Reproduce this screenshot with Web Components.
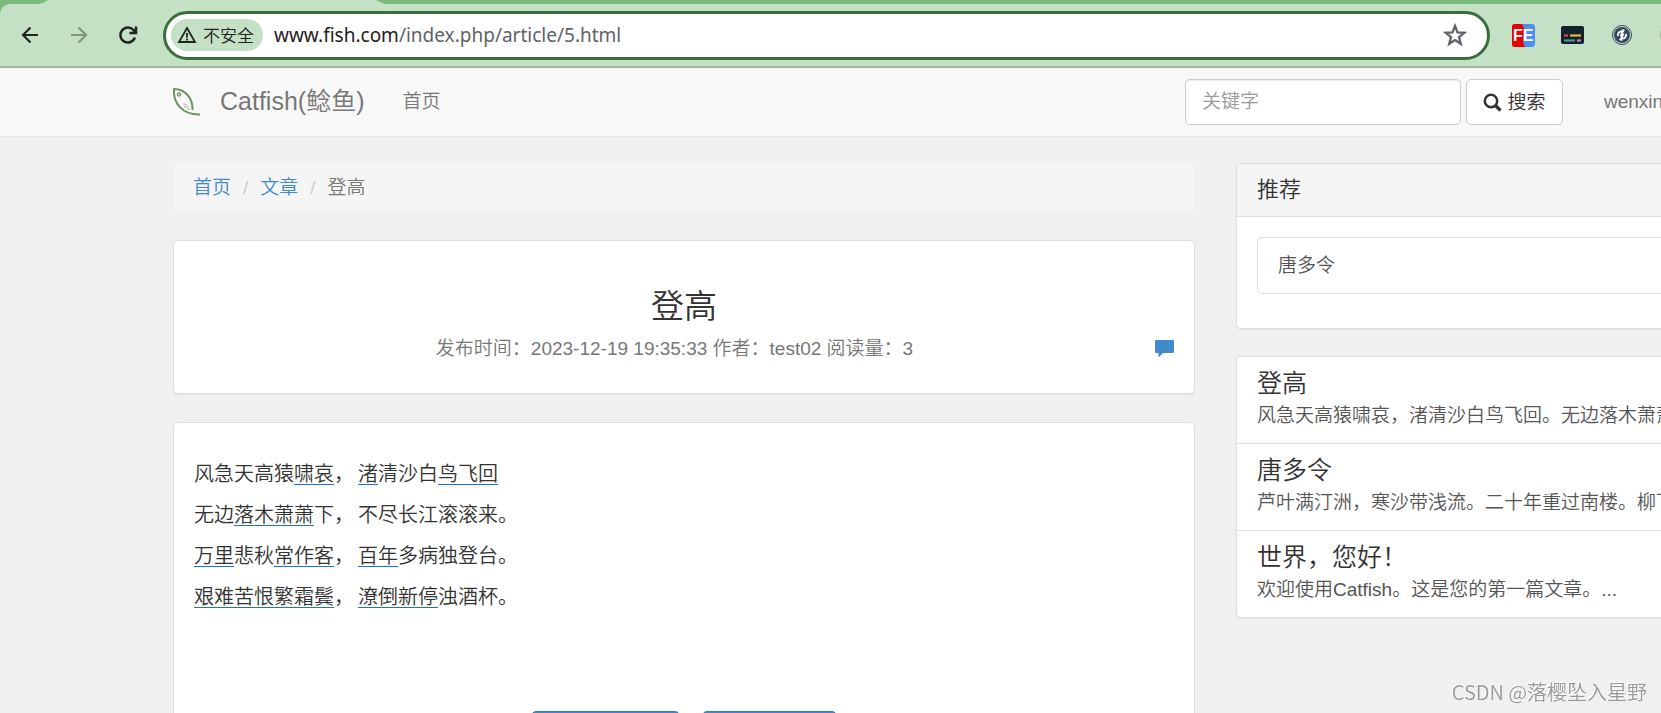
<!DOCTYPE html>
<html lang="zh-CN">
<head>
<meta charset="utf-8">
<title>登高</title>
<style>
  html, body { margin: 0; height: 100%; overflow: hidden; }
  body {
    background: #f0f0f0; color: #333;
    font: 350 19px/27px "Liberation Sans", "Noto Sans CJK SC", sans-serif;
    text-spacing-trim: space-all;
    --line: #ddd; --link: #428bca; --muted: #777;
  }
</style>
</head>
<body>
<browser-bar></browser-bar>
<site-nav></site-nav>
<page-columns>
  <crumb-trail slot="main"></crumb-trail>
  <article-head slot="main"></article-head>
  <article-body slot="main"></article-body>
  <recommend-panel slot="side"></recommend-panel>
  <article-list slot="side">
    <article-item heading="登高">风急天高猿啸哀，渚清沙白鸟飞回。无边落木萧萧</article-item>
    <article-item heading="唐多令">芦叶满汀洲，寒沙带浅流。二十年重过南楼。柳下</article-item>
    <article-item heading="世界，您好！">欢迎使用Catfish。这是您的第一篇文章。...</article-item>
  </article-list>
</page-columns>
<water-mark>CSDN @落樱坠入星野</water-mark>

<script>
const define = (name, html) => customElements.define(name, class extends HTMLElement {
  constructor() {
    super();
    this.attachShadow({ mode: "open" }).innerHTML =
      "<style>*{box-sizing:border-box}a{color:inherit;text-decoration:none}</style>" + html;
  }
});

define("browser-bar", `
<style>
  :host { display: block; background: #7bbb7c; border-bottom: 2px solid #9fb5a0; }
  .strip { display: flex; height: 4px; }
  .tab { width: 377px; height: 4px; }
  .bar { display: flex; align-items: center; height: 62px; background: #c5e1c5; border-top-left-radius: 10px; }
  button { border: 0; padding: 0; background: none; width: 49px; height: 40px; display: grid; place-items: center; }
  .nav { display: flex; padding-left: 5px; margin-right: 11px; }
  .box { flex: 1; min-width: 0; display: flex; align-items: center; height: 49px; border: 3px solid #3a6f3c;
    border-radius: 25px; background: #fff; padding: 0 8px 0 5px; }
  .chip { display: flex; align-items: center; gap: 6px; width: 92px; height: 32px; padding-left: 6px; border-radius: 16px;
    background: #c5e1c5; color: #1f2420; font-size: 17px; line-height: 32px; white-space: nowrap; }
  .chip span { padding-top: 3px; }
  .url { flex: 1; padding-left: 11px; color: #5f6368; font: 400 19px/27px "Noto Sans", sans-serif; white-space: nowrap; }
  .url b { font-weight: 400; color: #1f2023; }
  .ext { display: flex; width: 171px; padding-left: 9px; overflow: hidden; }
  .ext button { flex: none; }
</style>
<div class="strip"><svg class="tab" viewBox="0 0 377 4" preserveAspectRatio="none"><path d="M36 4C42 4 45 2 48 0H376C378 2 384 4 390 4Z" fill="#c5e1c5"/></svg><svg width="20" height="4"><path d="M0 0C2 2 6 4 12 4H0Z" fill="#c5e1c5"/></svg></div>
<div class="bar">
  <div class="nav">
    <button aria-label="后退"><svg width="20" height="20" fill="none" stroke="#1f2420" stroke-width="2.2"><path d="M18 10H3M10.500 2.500L3 10l7.500 7.500"/></svg></button>
    <button aria-label="前进"><svg width="20" height="20" fill="none" stroke="#82957f" stroke-width="2.200"><path d="M2 10h15M9.500 2.500L17 10l-7.500 7.500"/></svg></button>
    <button aria-label="刷新"><svg width="20" height="20" fill="none" stroke="#1f2420" stroke-width="2.500"><path d="M17 12.500A7.500 7.500 0 1 1 15.500 5L18 8M18 1.500V8H11.500"/></svg></button>
  </div>
  <div class="box">
    <div class="chip"><svg width="20" height="18" fill="none" stroke="#1f2420" stroke-width="1.800"><path d="M10 2L18 16H2ZM10 7v4.500M10 12.500v2"/></svg><span>不安全</span></div>
    <div class="url"><b>www.fish.com</b>/index.php/article/5.html</div>
    <button aria-label="收藏"><svg width="24" height="24" fill="none" stroke="#5f6368" stroke-width="2.300"><path d="M12 3l2.500 6.400 6.800.4-5.300 4.300 1.800 6.700L12 17l-5.800 3.800L8 14.100 2.700 9.800l6.800-.4Z"/></svg></button>
  </div>
  <div class="ext">
    <button aria-label="FE"><svg width="23" height="23"><rect width="23" height="23" rx="3" fill="#4a90f0"/><path d="M3 0H10Q13 4 11.500 11T13 23H3Q0 23 0 20V3Q0 0 3 0Z" fill="#e60000"/><text x="1" y="17" font-family="Liberation Sans" font-weight="700" font-size="16" fill="#fff">FE</text></svg></button>
    <button aria-label="字幕"><svg width="23" height="18"><rect width="23" height="18" rx="2" fill="#14232b"/><path d="M3 9.500h4" stroke="#e4484b" stroke-width="2.200"/><path d="M9 9.500h11" stroke="#f2b632" stroke-width="2.200"/><path d="M3 14.500h11" stroke="#3f9a9c" stroke-width="2.200"/><path d="M16 14.500h4" stroke="#b687c4" stroke-width="2.200"/></svg></button>
    <button aria-label="同步"><svg width="22" height="22" fill="none"><circle cx="11" cy="11" r="9.500" fill="#c5e1c5" stroke="#34495e"/><circle cx="11" cy="11" r="8" fill="#34495e"/><path d="M7 12C6.500 9 8.500 7 11.500 7.500L9.500 12.500M15 10C15.500 13 13.500 15 10.500 14.500L12.500 9.500" stroke="#fff" stroke-width="1.800"/><path d="M10.500 5l3.500 1-2 3ZM11.500 17l-3.500-1 2-3Z" fill="#fff"/></svg></button>
    <button aria-label="扩展"><svg width="24" height="22"><circle cx="12" cy="11" r="11" fill="#9bb09c"/></svg></button>
  </div>
</div>`);

define("site-nav", `
<style>
  :host { display: block; background: #f8f8f8; border-bottom: 1px solid #e7e7e7; overflow: hidden; }
  nav { display: flex; align-items: center; height: 68px; padding-left: 173px; color: var(--muted); white-space: nowrap; }
  .brand { display: flex; align-items: center; gap: 19px; font-size: 25px; }
  .brand span, .home, .user { padding-bottom: 2px; }
  .home { margin-left: 38px; flex: 1; }
  form { display: flex; gap: 5px; }
  input { width: 276px; height: 46px; padding: 0 16px; border: 1px solid #ccc; border-radius: 5px; background: #fff;
    font: inherit; box-shadow: inset 0 1px 1px rgba(0,0,0,.075); }
  input::placeholder { color: #999; opacity: 1; }
  button { display: flex; align-items: center; justify-content: center; gap: 5px; width: 97px; height: 46px; padding: 0;
    border: 1px solid #ccc; border-radius: 5px; background: #fff; color: #333; font: inherit; }
  .user { width: 57px; margin-left: 41px; overflow: hidden; }
</style>
<nav>
  <a class="brand" href="#"><svg width="28" height="30" fill="none" stroke="#6c9460" stroke-width="2"><path d="M19.500 23C20 11 12 2 1 2C0 16 9 28 27 27.500"/><circle cx="6" cy="7.500" r="1.500" stroke-width="1.300"/><path d="M10 17l4 .5M11 19.500l5 .5M14 22l3 .5" stroke="#a9c0a2" stroke-width="1.200"/></svg><span>Catfish(鲶鱼)</span></a>
  <a class="home" href="#">首页</a>
  <form onsubmit="return false"><input type="text" placeholder="关键字" aria-label="关键字"><button><svg width="19" height="19" fill="none" stroke="#333"><circle cx="8" cy="8" r="6.200" stroke-width="2.500"/><path d="M12.500 12.500L17.500 17.500" stroke-width="3.400"/></svg><span>搜索</span></button></form>
  <a class="user" href="#">wenxin</a>
</nav>`);

define("page-columns", `
<style>
  :host { display: grid; grid-template-columns: minmax(0, 1fr) 425px; gap: 41px; padding: 26px 0 0 173px; }
  div { display: flex; flex-direction: column; min-width: 0; }
  .main { gap: 28px; } .side { gap: 27px; overflow: hidden; }
</style>
<div class="main"><slot name="main"></slot></div>
<div class="side"><slot name="side"></slot></div>`);

define("crumb-trail", `
<style>
  :host { display: block; background: #f5f5f5; border-radius: 5px; padding: 11px 20px; color: var(--muted); }
  ol { display: flex; list-style: none; margin: 0; padding: 0; }
  li + li::before { content: "/"; color: #ccc; padding: 0 12px; }
  a { color: var(--link); }
</style>
<ol><li><a href="#">首页</a></li><li><a href="#">文章</a></li><li>登高</li></ol>`);

const panel = "background:#fff;border:1px solid var(--line);border-radius:5px;box-shadow:0 1px 1px rgba(0,0,0,.05);";

define("article-head", `
<style>
  :host { display: block; ${panel} padding: 47px 20px 31px; text-align: center; }
  h1 { margin: 0 0 10px; font-size: 33px; line-height: 37px; font-weight: 350; }
  .meta { display: flex; align-items: center; color: var(--muted); }
  p { flex: 1; margin: 0; }
</style>
<h1>登高</h1>
<div class="meta"><p>发布时间：2023-12-19 19:35:33 作者：test02 阅读量：3</p>
<a href="#" aria-label="评论"><svg width="19" height="18" style="display:block"><path d="M1 0H18Q19 0 19 1V12Q19 13 18 13H8L3.500 17.500V13H1Q0 13 0 12V1Q0 0 1 0Z" fill="#428bca"/></svg></a></div>`);

define("article-body", `
<style>
  :host { display: block; ${panel} padding: 31px 20px; }
  .poem { display: grid; grid-template-columns: 164px 1fr; grid-auto-rows: 41px; align-items: center; font-size: 20px; line-height: 23px; white-space: nowrap; }
  u { text-decoration: none; display: inline-block; line-height: 19px; border-bottom: 1px solid #1f6fd8; }
  .pager { display: flex; justify-content: center; gap: 22px; margin-top: 93px; }
  button { height: 46px; width: 149px; border: 1px solid #357ebd; border-radius: 5px; background: var(--link); }
  button + button { width: 135px; }
</style>
<div class="poem">
  <span>风急天高猿<u>啸哀</u>，</span><span><u>渚</u>清沙白<u>鸟飞回</u></span>
  <span>无边<u>落木萧萧</u>下，</span><span>不尽长江滚滚来。</span>
  <span><u>万里</u>悲秋<u>常作客</u>，</span><span><u>百年</u>多病独登台。</span>
  <span><u>艰难苦恨繁霜鬓</u>，</span><span><u>潦倒新停</u>浊酒杯。</span>
</div>
<div class="pager"><button aria-label="上一篇"></button><button aria-label="下一篇"></button></div>`);

define("recommend-panel", `
<style>
  :host { display: block; ${panel} border-right: 0; border-radius: 5px 0 0 5px; }
  h2 { margin: 0; padding: 12px 20px 13px; background: #f5f5f5; border-bottom: 1px solid var(--line); font-size: 22px; line-height: 27px; font-weight: 350; }
  .list { padding: 20px 0 34px 20px; }
  a { display: block; border: 1px solid var(--line); border-right: 0; border-radius: 5px 0 0 5px; padding: 14px 20px; color: #555; }
</style>
<h2>推荐</h2><div class="list"><a href="#">唐多令</a></div>`);

define("article-list", `
<style>
  :host { display: block; ${panel} border-right: 0; border-radius: 5px 0 0 5px; overflow: hidden; }
</style><slot></slot>`);

customElements.define("article-item", class extends HTMLElement {
  constructor() {
    super();
    this.attachShadow({ mode: "open" }).innerHTML = `
<style>
  :host { display: block; border-bottom: 1px solid var(--line); white-space: nowrap; }
  :host(:last-child) { border-bottom: 0; }
  a { display: block; padding: 13px 0 14px 20px; color: #555; text-decoration: none; }
  h3 { margin: 0 0 5px; color: #333; font-size: 25px; line-height: 27px; font-weight: 350; }
  p { margin: 0; }
</style><a href="#"><h3></h3><p><slot></slot></p></a>`;
    this.shadowRoot.querySelector("h3").textContent = this.getAttribute("heading");
  }
});

define("water-mark", `
<style>
  :host { position: fixed; right: 14px; bottom: 8px; color: #989898; font-family: "Noto Sans CJK SC", sans-serif; font-size: 20px; text-shadow: -1px -1px 0 #fff; white-space: nowrap; }
</style><slot></slot>`);
</script>
</body>
</html>
